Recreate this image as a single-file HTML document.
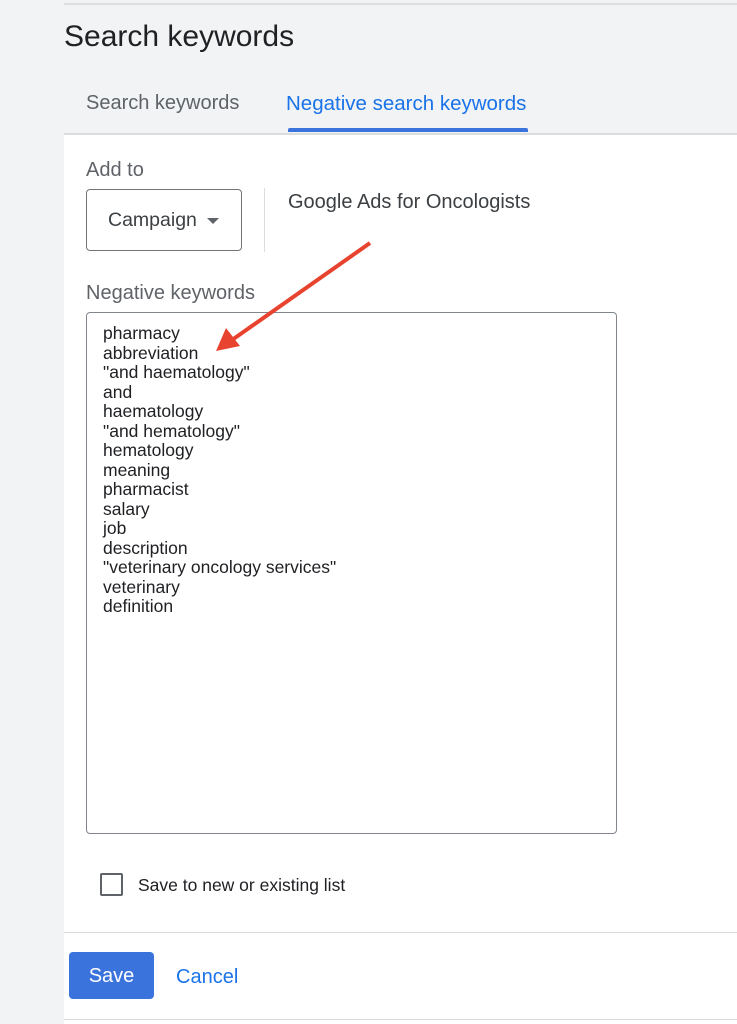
<!DOCTYPE html>
<html><head><style>
body{margin:0;width:737px;height:1024px;background:#f1f3f4;position:relative;overflow:hidden;font-family:"Liberation Sans",Arial,sans-serif;}
.a{position:absolute;}
</style></head><body>
<div class="a" style="left:64px;top:3px;width:673px;height:2px;background:#dcdfe2"></div>
<div class="a" style="left:64px;top:20px;font-size:30px;color:#202124;">Search keywords</div>
<div class="a" style="left:86px;top:92px;font-size:20px;color:#5f6368;">Search keywords</div>
<div class="a" style="left:286px;top:92px;font-size:20.5px;color:#1a73e8;">Negative search keywords</div>
<div class="a" style="left:288px;top:128px;width:240px;height:4px;background:#3b73dc;border-radius:2px 2px 0 0"></div>
<div class="a" style="left:64px;top:133px;width:673px;height:2px;background:#dadce0"></div>
<div class="a" style="left:64px;top:135px;width:673px;height:889px;background:#fff"></div>
<div class="a" style="left:86px;top:159px;font-size:20px;color:#5f6368;">Add to</div>
<div class="a" style="left:86px;top:189px;width:154px;height:60px;border:1.5px solid #70757a;border-radius:4px;"></div>
<div class="a" style="left:108px;top:209px;font-size:19.5px;color:#3c4043;">Campaign</div>
<div class="a" style="left:207px;top:218px;width:0;height:0;border-left:6px solid transparent;border-right:6px solid transparent;border-top:6px solid #5f6368"></div>
<div class="a" style="left:264px;top:188px;width:1px;height:64px;background:#dadce0"></div>
<div class="a" style="left:288px;top:191px;font-size:20px;color:#3c4043;">Google Ads for Oncologists</div>
<div class="a" style="left:86px;top:282px;font-size:20px;color:#5f6368;">Negative keywords</div>
<div class="a" style="left:86px;top:312px;width:529px;height:520px;border:1.5px solid #80868b;border-radius:4px;"></div>
<div class="a" style="left:103px;top:324px;font-size:17.5px;line-height:19.5px;color:#202124;">pharmacy<br>abbreviation<br>"and haematology"<br>and<br>haematology<br>"and hematology"<br>hematology<br>meaning<br>pharmacist<br>salary<br>job<br>description<br>"veterinary oncology services"<br>veterinary<br>definition</div>
<svg class="a" style="left:0;top:0" width="737" height="1024"><line x1="370" y1="243" x2="232" y2="340" stroke="#e8432f" stroke-width="4"/><polygon points="216,351 226,328 240,346" fill="#e8432f"/></svg>
<div class="a" style="left:100px;top:873px;width:19px;height:19px;border:2px solid #5f6368;border-radius:2px;"></div>
<div class="a" style="left:138px;top:875px;font-size:17.5px;color:#202124;">Save to new or existing list</div>
<div class="a" style="left:64px;top:932px;width:673px;height:1px;background:#dadce0"></div>
<div class="a" style="left:69px;top:952px;width:85px;height:47px;background:#3b73dc;border-radius:4px;color:#fff;font-size:20px;line-height:49px;text-align:center;">Save</div>
<div class="a" style="left:176px;top:966px;font-size:20px;color:#1a73e8;">Cancel</div>
<div class="a" style="left:64px;top:1019px;width:673px;height:1px;background:#dadce0"></div>
</body></html>
